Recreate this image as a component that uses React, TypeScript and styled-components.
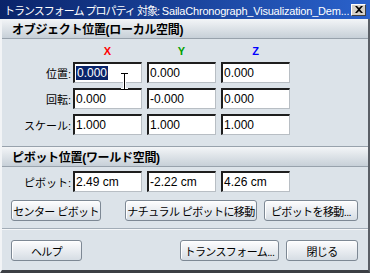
import styled, { createGlobalStyle } from 'styled-components';

const GlobalStyle = createGlobalStyle`
  html, body {
    margin: 0;
    padding: 0;
    background: #dce3e9;
  }
  body {
    font-family: 'Liberation Sans', 'Noto Sans CJK JP', sans-serif;
    font-size: 11px;
    color: #000;
  }
`;

const axes = [
  { name: 'X', color: '#ff0000' },
  { name: 'Y', color: '#00a000' },
  { name: 'Z', color: '#0000ff' },
];

const rows = [
  { label: '位置:', values: ['0.000', '0.000', '0.000'] },
  { label: '回転:', values: ['0.000', '-0.000', '0.000'] },
  { label: 'スケール:', values: ['1.000', '1.000', '1.000'] },
];

const App = () => {
  return (
    <>
      <GlobalStyle />
      <Window>
        <TitleBar>
          <TitleText>
            <TitleJa>トランスフォーム プロパティ 対象:</TitleJa> SailaChronograph_Visualization_Dem...
          </TitleText>
          <CloseButton>
            <svg width="8" height="7" viewBox="0 0 8 7">
              <path d="M0 0h2l2 2 2-2h2L5 3.5 8 7H6L4 5 2 7H0l3-3.5z" fill="#000" />
            </svg>
          </CloseButton>
        </TitleBar>
        <Body>
          <SectionHeader>オブジェクト位置(ローカル空間)</SectionHeader>
          <SectionBody $pad="0 0 11px">
            <AxisRow>
              <Label />
              <Fields>
                {axes.map((a) => (
                  <Axis key={a.name} color={a.color}>
                    {a.name}
                  </Axis>
                ))}
              </Fields>
            </AxisRow>
            {rows.map((r, i) => (
              <Row key={r.label}>
                <Label>{r.label}</Label>
                <Fields>
                  {r.values.map((v, j) => (
                    <Field key={j}>{i === 0 && j === 0 ? <Selected>{v}</Selected> : v}</Field>
                  ))}
                </Fields>
              </Row>
            ))}
            <Cursor width="9" height="17" viewBox="0 0 9 17">
              <path d="M1 .5h7M1 16.5h7M4.5 .5v16" stroke="#fff" strokeWidth="3" fill="none" />
              <path d="M1 .5h7M1 16.5h7M4.5 .5v16" stroke="#000" strokeWidth="1" fill="none" />
            </Cursor>
          </SectionBody>
          <SectionHeader $top>ピボット位置(ワールド空間)</SectionHeader>
          <SectionBody $pad="4px 0 0">
            <Row>
              <Label>ピボット:</Label>
              <Fields>
                <Field>2.49 cm</Field>
                <Field>-2.22 cm</Field>
                <Field>4.26 cm</Field>
              </Fields>
            </Row>
            <ButtonRow>
              <Button $w={90}>センター ピボット</Button>
              <ButtonGroup>
                <Button $w={132}>ナチュラル ピボットに移動</Button>
                <Button $w={94}>ピボットを移動...</Button>
              </ButtonGroup>
            </ButtonRow>
          </SectionBody>
          <Separator />
          <ButtonRow $top={10}>
            <Button $w={71}>ヘルプ</Button>
            <ButtonGroup>
              <Button $w={99}>トランスフォーム...</Button>
              <Button $w={72}>閉じる</Button>
            </ButtonGroup>
          </ButtonRow>
        </Body>
      </Window>
    </>
  );
};

const Window = styled.div`
  width: 370px;
  height: 273px;
  display: flex;
  flex-direction: column;
  background: #dce3e9;
  overflow: hidden;
`;

const TitleBar = styled.div`
  height: 19px;
  flex: none;
  display: flex;
  align-items: center;
  padding: 0 4px 0 4px;
  background: linear-gradient(to right, #0a246a, #2a62cc);
  color: #fff;
`;

const TitleText = styled.div`
  flex: 1;
  font-size: 11px;
  letter-spacing: -0.2px;
  white-space: nowrap;
  overflow: hidden;
`;

const TitleJa = styled.span`
  letter-spacing: -1px;
`;

const CloseButton = styled.div`
  width: 15px;
  height: 12px;
  flex: none;
  box-sizing: border-box;
  margin-left: 2px;
  display: flex;
  align-items: center;
  justify-content: center;
  background: #d4d0c8;
  border: 1px solid;
  border-color: #fff #404040 #404040 #fff;
`;

const Body = styled.div`
  flex: 1;
  display: flex;
  flex-direction: column;
  border-left: 2px solid #f2f4f6;
  border-right: 2px solid #5a5f66;
  border-bottom: 3px solid #3c3f44;
`;

const SectionHeader = styled.div<{ $top?: boolean }>`
  flex: none;
  box-sizing: border-box;
  padding-left: 10px;
  display: flex;
  align-items: center;
  font-weight: bold;
  font-size: 12px;
  letter-spacing: -0.3px;
  background: linear-gradient(#f3f5f7, #c7d0d8);
  border-top: ${({ $top }) => ($top ? '1px solid #98a2ac' : 'none')};
  border-bottom: 1px solid #98a2ac;
  height: ${({ $top }) => ($top ? '21px' : '20px')};
`;

const SectionBody = styled.div<{ $pad: string }>`
  position: relative;
  display: flex;
  flex-direction: column;
  gap: 5px;
  padding: ${({ $pad }) => $pad};
`;

const AxisRow = styled.div`
  display: flex;
  height: 19px;
  align-items: flex-end;
  margin-bottom: -1px;
`;

const Axis = styled.div<{ color: string }>`
  width: 69px;
  text-align: center;
  color: ${({ color }) => color};
  font-weight: bold;
  font-size: 11px;
  line-height: 14px;
`;

const Row = styled.div`
  display: flex;
  align-items: center;
`;

const Label = styled.div`
  width: 69px;
  margin-right: 2px;
  text-align: right;
  font-size: 11px;
  white-space: nowrap;
`;

const Fields = styled.div`
  display: flex;
  gap: 5px;
`;

const Field = styled.div`
  width: 69px;
  height: 21px;
  box-sizing: border-box;
  background: #fff;
  border-style: solid;
  border-width: 2px 1px 1px 2px;
  border-color: #1e1e1e #b8bec4 #b8bec4 #1e1e1e;
  padding-left: 1px;
  font-size: 12px;
  line-height: 18px;
  white-space: nowrap;
  overflow: hidden;
`;

const Selected = styled.span`
  background: #0a246a;
  color: #fff;
  padding: 0 1px;
`;

const Cursor = styled.svg`
  position: absolute;
  left: 118px;
  top: 34px;
`;

const ButtonRow = styled.div<{ $top?: number }>`
  display: flex;
  justify-content: space-between;
  padding: 0 10px 0 9px;
  margin-top: ${({ $top }) => $top ?? 3}px;
`;

const ButtonGroup = styled.div`
  display: flex;
  gap: 7px;
`;

const Button = styled.button<{ $w: number }>`
  width: ${({ $w }) => $w}px;
  height: 21px;
  box-sizing: border-box;
  padding: 0;
  font-family: inherit;
  font-size: 11px;
  letter-spacing: -0.6px;
  color: #000;
  white-space: nowrap;
  background: linear-gradient(#fdfdfe, #d6dde4);
  border: 1px solid #7d8894;
  border-radius: 3px;
  box-shadow: inset 1px 1px 0 #fff;
`;

const Separator = styled.div`
  margin-top: 7px;
  height: 0;
  border-top: 1px solid #a2acb6;
  border-bottom: 1px solid #f4f6f8;
`;

export default App;
